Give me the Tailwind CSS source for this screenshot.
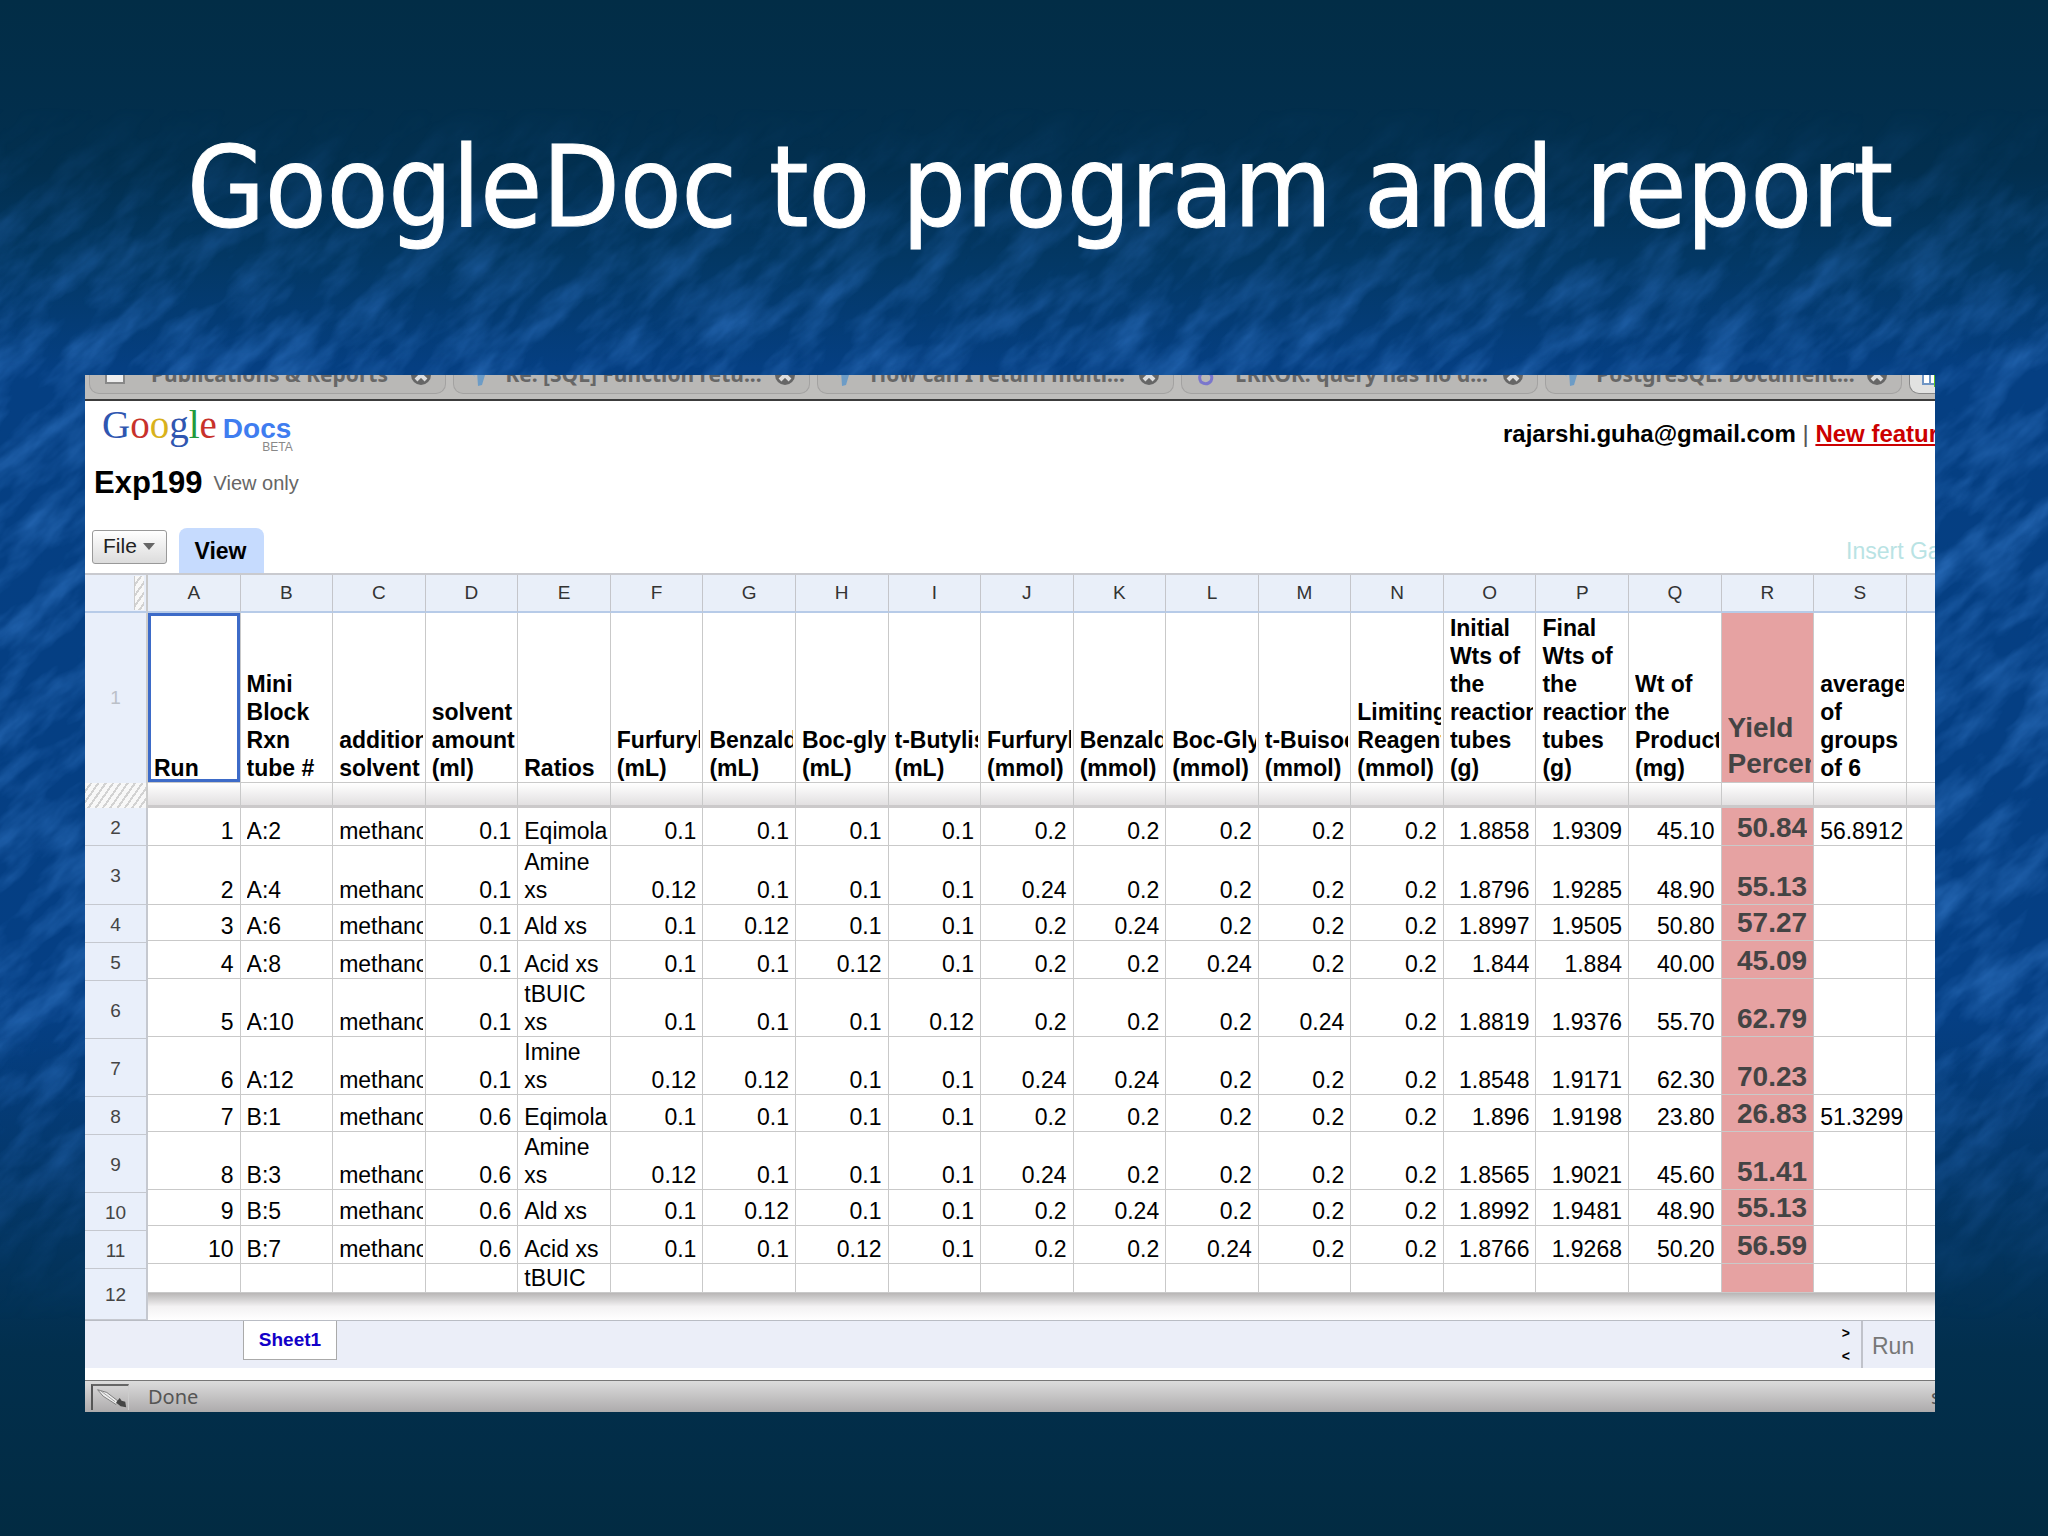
<!DOCTYPE html>
<html lang="en">
<head>
  <meta charset="UTF-8" />
  <meta name="viewport" content="width=device-width, initial-scale=1.0" />
  <title>GoogleDoc to program and report</title>
  <script src="https://cdn.jsdelivr.net/npm/@tailwindcss/browser@4"></script>
</head>
<body class="relative min-h-screen overflow-x-hidden bg-[linear-gradient(180deg,#022d46_0%,#022f4f_11%,#033865_17%,#053f82_24%,#053f84_66%,#04386c_76%,#022f4d_88%,#022b42_100%)] font-['Liberation_Sans',Arial,sans-serif] text-black">

  <!-- Slide background texture -->
  <svg class="absolute inset-0 w-full h-full [mask-image:linear-gradient(180deg,transparent_7%,black_24%,black_66%,transparent_86%)]" aria-hidden="true">
    <filter id="brush" x="0" y="0" width="100%" height="100%" color-interpolation-filters="sRGB">
      <feTurbulence type="fractalNoise" baseFrequency="0.014 0.04" numOctaves="4" seed="8" />
      <feColorMatrix values="0 0 0 0 0.16  0 0 0 0 0.42  0 0 0 0 0.72  1.6 0 0 0 -0.6" />
    </filter>
    <rect x="-900" y="-900" width="3900" height="3400" filter="url(#brush)" transform="rotate(-42 1024 768)" />
  </svg>

  <main class="relative">
    <h1 class="pt-[117px] pl-8 text-center text-[112px] leading-[140px] text-white whitespace-nowrap font-['DejaVu_Sans_Condensed',Tahoma,sans-serif] [-webkit-text-stroke:1px_white]">GoogleDoc to program and report</h1>

    <section class="mt-[118px] ml-[85px] mr-[113px] bg-white overflow-hidden">
      <!-- Browser tabs -->
      <nav id="tabs" class="flex gap-[7px] h-[26px] pl-1 bg-[#bfbebc] border-b-2 border-[#3c3c3c] overflow-hidden"></nav>

      <!-- Docs header -->
      <header class="flex justify-between h-[172px] overflow-hidden">
        <div class="flex flex-col pl-[7px]">
          <div class="relative flex items-baseline gap-[6px] pl-[10px] pt-[2px] leading-[44px]">
            <span class="text-[39px] font-['Liberation_Serif',serif]"><span class="text-[#2f56b0]">G</span><span class="text-[#c8312b]">o</span><span class="text-[#d9b21c]">o</span><span class="text-[#2f56b0]">g</span><span class="text-[#239a3b]">l</span><span class="text-[#c8312b]">e</span></span>
            <span class="text-[28px] font-bold text-[#3f7df0]">Docs</span>
            <span class="absolute right-[6px] top-[40px] text-[12px] leading-[12px] text-[#888]">BETA</span>
          </div>
          <div class="flex items-center gap-[11px] pl-[2px] pt-3 leading-[40px]">
            <h2 class="text-[31px] font-bold">Exp199</h2>
            <span class="text-[20px] text-[#666]">View only</span>
          </div>
          <div class="flex items-start gap-3 mt-auto">
            <button type="button" class="mt-[2px] flex items-center gap-[6px] h-[34px] w-[75px] pl-[10px] pb-[2px] rounded-[3px] border border-[#999] bg-linear-to-b from-white to-[#dcdcdc] text-[21px] text-[#222]">File
              <svg class="w-3 h-[7px]" viewBox="0 0 12 7"><path d="M0 0h12L6 7z" fill="#666" /></svg>
            </button>
            <button type="button" class="h-[45px] w-[85px] pt-[2px] pr-[2px] rounded-t-[8px] bg-[#c6dbfe] text-[23px] font-bold">View</button>
          </div>
        </div>
        <div class="flex flex-col justify-between w-[432px] whitespace-nowrap">
          <div class="pt-[17px] text-[24px] leading-[32px] font-bold">rajarshi.guha@gmail.com <span class="font-normal text-[#555]">|</span> <a href="#" class="text-[#cc0000] underline">New features</a></div>
          <a href="#" class="pl-[343px] pb-[7px] text-[23px] leading-[30px] text-[#b9e3e4]">Insert Gadget</a>
        </div>
      </header>

      <!-- Spreadsheet -->
      <div class="flex border-t-2 border-[#c9cacf]">
        <table class="w-[63px] shrink-0 table-fixed border-separate border-spacing-0 bg-[#e9effa] text-[19px] text-[#444]">
          <tbody id="rowLabels"></tbody>
        </table>
        <div class="flex-1 min-w-0 overflow-hidden">
          <table class="w-[103.6%] table-fixed border-separate border-spacing-0 text-[23px] leading-[28px]">
            <thead>
              <tr id="letters" class="bg-[#e9eff9] text-[19px] text-[#333]"></tr>
            </thead>
            <tbody id="cells"></tbody>
          </table>
          <div class="h-[27px] bg-linear-to-b from-[#b8b6b6] via-[#f3f2f3] to-white"></div>
        </div>
      </div>

      <!-- Sheet bar -->
      <div class="flex h-[48px] pl-[158px] bg-[#ebeef8] border-t border-[#b9bcc4]">
        <button type="button" class="h-[39px] w-[94px] bg-white border border-t-0 border-[#aaa] text-[19px] font-bold text-[#1200c8]">Sheet1</button>
        <div class="ml-auto flex flex-col justify-center gap-[8px] mr-[11px] text-[14px] leading-[15px] font-bold">
          <button type="button">&gt;</button>
          <button type="button">&lt;</button>
        </div>
        <div class="w-[74px] pl-[9px] border-l-2 border-[#c0c2ca] text-[23px] leading-[50px] text-[#777]">Run</div>
      </div>

      <!-- Status bar -->
      <footer class="mt-3 flex items-center h-[32px] pl-[6px] border-t border-[#777] bg-linear-to-b from-[#dcdcdc] to-[#adabac] font-['Noto_Sans',sans-serif] text-[20px] leading-[28px] text-[#555]">
        <svg class="w-[38px] h-[26px] border-l-2 border-t-2 border-l-[#555] border-t-[#666] border-r border-r-[#ccc]" viewBox="0 0 38 26">
          <path d="M5 4l10 3 13 10-3 3-14-9z" fill="#eee" stroke="#777" />
          <path d="M8 5l16 12" stroke="#999" />
          <path d="M25 18l4-5 2 3 4 1 1 6-6-1z" fill="#444" />
        </svg>
        <span class="pl-[19px]">Done</span>
        <span class="ml-auto w-[4px] overflow-hidden">s</span>
      </footer>
    </section>
  </main>

  <script>
    const elephant = '<svg class="w-6 h-7 shrink-0" viewBox="0 0 24 28"><path d="M1 8l5 3 3 7-5-5z" fill="#8fb0cd"/><path d="M8 2h12l-1 14-3 10-4 1-1-15z" fill="#6d9cc6"/><path d="M9 6v8M19 8l3 6" stroke="#8fb0cd" stroke-width="2"/></svg>';
    const page = '<svg class="w-6 h-7 shrink-0" viewBox="0 0 24 28"><path d="M4 2h18v22H4z" fill="#eee" stroke="#888" stroke-width="2"/></svg>';
    const spiral = '<svg class="w-6 h-7 shrink-0" viewBox="0 0 24 28"><path d="M8 4l3 8q-8 4-4 11 6 4 10-1 3-7-5-9l8-5" fill="none" stroke="#7a76cc" stroke-width="3"/></svg>';
    const closeIcon = '<svg class="w-6 h-6 shrink-0" viewBox="0 0 24 24"><circle cx="12" cy="12" r="10" fill="#666"/><path d="M7 7l10 10M17 7L7 17" stroke="#ddd" stroke-width="4"/></svg>';

    const tabs = [
      [page, 'Publications &amp; Reports'],
      [elephant, 'Re: [SQL] Function retu...'],
      [elephant, 'How can I return multi...'],
      [spiral, 'ERROR: query has no d...'],
      [elephant, 'PostgreSQL: Document...']
    ];
    document.getElementById('tabs').innerHTML = tabs.map(([icon, title]) => `
      <div class="flex items-end justify-between w-[357px] h-[19px] shrink-0 px-3 pb-[6px] rounded-b-[10px] border border-t-0 border-[#a3a2a1] bg-[#b9b8b6]">
        ${icon}<a href="#" class="flex-1 pb-[2px] pl-1 text-center font-['Noto_Sans',sans-serif] text-[21px] leading-[22px] font-bold text-[#666] whitespace-nowrap">${title}</a>${closeIcon}
      </div>`).join('') + `
      <div class="flex items-end w-[357px] h-[19px] shrink-0 px-3 pb-[6px] rounded-b-[10px] border border-t-0 border-[#888] bg-[#e2e2e1]">
        <svg class="w-6 h-6" viewBox="0 0 24 24"><path d="M1 1h20v20H1zM1 11h20M8 1v20" fill="#fff" stroke="#6f95c4" stroke-width="2"/><path d="M12 8h12v16H12z" fill="#5cc21f"/></svg>
      </div>`;

    const line = 'border-r border-b border-[#c9c9c9]';

    document.getElementById('letters').innerHTML = [...'ABCDEFGHIJKLMNOPQRS', ''].map(l =>
      `<th scope="col" class="h-[38px] font-normal border-r border-r-[#c4c5ca] border-b-2 border-b-[#b7cbe8]">${l}</th>`).join('');

    const labels = [
      ['2', 'h-[38px]'], ['3', 'h-[59px]'], ['4', 'h-[38px]'], ['5', 'h-[38px]'], ['6', 'h-[58px]'], ['7', 'h-[58px]'],
      ['8', 'h-[38px]'], ['9', 'h-[58px]'], ['10', 'h-[38px]'], ['11', 'h-[38px]'], ['12', 'h-[51px]']
    ];
    const hatch = 'bg-[repeating-linear-gradient(125deg,#f8f8f8_0px,#f8f8f8_4px,#d2d2d2_4px,#d2d2d2_6px)]';
    document.getElementById('rowLabels').innerHTML = `
      <tr><td class="h-[38px] p-0 border-b-2 border-b-[#b7cbe8] border-r-2 border-r-[#c9c9c9]"><div class="ml-auto mr-[2px] w-[10px] h-[34px] border-l border-[#ccc] ${hatch}"></div></td></tr>
      <tr><th scope="row" class="h-[170px] font-normal text-[#bbc0c8] border-r-2 border-[#ccc]">1</th></tr>
      <tr><td class="h-[25px] border-r-2 border-[#ccc] ${hatch}"></td></tr>` +
      labels.map(([n, h]) => `<tr><th scope="row" class="${h} p-0 pt-[3px] font-normal border-r-2 border-b border-[#c5c8cf]">${n}</th></tr>`).join('');

    const head = [
      'Run', 'Mini\nBlock\nRxn\ntube #', 'additional\nsolvent', 'solvent\namount\n(ml)', 'Ratios', 'Furfurylamine\n(mL)',
      'Benzaldehyde\n(mL)', 'Boc-glycine\n(mL)', 't-Butylisocyanide\n(mL)', 'Furfurylamine\n(mmol)', 'Benzaldehyde\n(mmol)',
      'Boc-Glycine\n(mmol)', 't-Buisocyanide\n(mmol)', 'Limiting\nReagent\n(mmol)', 'Initial\nWts of\nthe\nreaction\ntubes\n(g)',
      'Final\nWts of\nthe\nreaction\ntubes\n(g)', 'Wt of\nthe\nProduct\n(mg)', 'Yield\nPercent', 'average\nof\ngroups\nof 6', ''
    ];
    const headRow = '<tr>' + head.map((t, i) => {
      const extra = i === 17 ? 'bg-[#e6a2a2] text-[#444] text-[28px] leading-[36px]' : i === 0 ? 'shadow-[inset_0_0_0_3px_#3d6bc8]' : '';
      return `<td class="h-[170px] p-0 pl-[6px] pr-[2px] align-bottom font-bold ${line} ${extra}"><div class="overflow-hidden whitespace-pre">${t}</div></td>`;
    }).join('') + '</tr>';

    const frozenRow = '<tr>' + head.map(() =>
      '<td class="h-[25px] p-0 border-r border-r-[#c9c9c9] border-b-3 border-b-[#cbc9ca] bg-linear-to-b from-white to-[#e2e0e1]"></td>').join('') + '</tr>';

    const rows = [
      ['h-[38px]', '1', 'A:2', 'methanol', '0.1', 'Eqimolar', '0.1', '0.1', '0.1', '0.1', '0.2', '0.2', '0.2', '0.2', '0.2', '1.8858', '1.9309', '45.10', '50.84', '56.8912', ''],
      ['h-[59px]', '2', 'A:4', 'methanol', '0.1', 'Amine\nxs', '0.12', '0.1', '0.1', '0.1', '0.24', '0.2', '0.2', '0.2', '0.2', '1.8796', '1.9285', '48.90', '55.13', '', ''],
      ['h-[36px]', '3', 'A:6', 'methanol', '0.1', 'Ald xs', '0.1', '0.12', '0.1', '0.1', '0.2', '0.24', '0.2', '0.2', '0.2', '1.8997', '1.9505', '50.80', '57.27', '', ''],
      ['h-[38px]', '4', 'A:8', 'methanol', '0.1', 'Acid xs', '0.1', '0.1', '0.12', '0.1', '0.2', '0.2', '0.24', '0.2', '0.2', '1.844', '1.884', '40.00', '45.09', '', ''],
      ['h-[58px]', '5', 'A:10', 'methanol', '0.1', 'tBUIC\nxs', '0.1', '0.1', '0.1', '0.12', '0.2', '0.2', '0.2', '0.24', '0.2', '1.8819', '1.9376', '55.70', '62.79', '', ''],
      ['h-[58px]', '6', 'A:12', 'methanol', '0.1', 'Imine\nxs', '0.12', '0.12', '0.1', '0.1', '0.24', '0.24', '0.2', '0.2', '0.2', '1.8548', '1.9171', '62.30', '70.23', '', ''],
      ['h-[37px]', '7', 'B:1', 'methanol', '0.6', 'Eqimolar', '0.1', '0.1', '0.1', '0.1', '0.2', '0.2', '0.2', '0.2', '0.2', '1.896', '1.9198', '23.80', '26.83', '51.3299', ''],
      ['h-[58px]', '8', 'B:3', 'methanol', '0.6', 'Amine\nxs', '0.12', '0.1', '0.1', '0.1', '0.24', '0.2', '0.2', '0.2', '0.2', '1.8565', '1.9021', '45.60', '51.41', '', ''],
      ['h-[36px]', '9', 'B:5', 'methanol', '0.6', 'Ald xs', '0.1', '0.12', '0.1', '0.1', '0.2', '0.24', '0.2', '0.2', '0.2', '1.8992', '1.9481', '48.90', '55.13', '', ''],
      ['h-[38px]', '10', 'B:7', 'methanol', '0.6', 'Acid xs', '0.1', '0.1', '0.12', '0.1', '0.2', '0.2', '0.24', '0.2', '0.2', '1.8766', '1.9268', '50.20', '56.59', '', ''],
      ['h-[29px]', '', '', '', '', 'tBUIC', '', '', '', '', '', '', '', '', '', '', '', '', '', '', '']
    ];
    // text columns: tube, solvent, ratios, averages
    const leftCols = [1, 2, 4, 18];
    document.getElementById('cells').innerHTML = headRow + frozenRow + rows.map(([h, ...vals]) =>
      '<tr>' + vals.map((v, i) => {
        const align = leftCols.includes(i) ? 'pl-[6px] pr-[2px]' : 'pr-[6px] text-right';
        const extra = i === 17 ? 'bg-[#e6a2a2] text-[#444] text-[28px] leading-[35px] font-bold' : '';
        return `<td class="${h} p-0 align-bottom ${line} ${align} ${extra}"><div class="overflow-hidden whitespace-pre">${v}</div></td>`;
      }).join('') + '</tr>').join('');
  </script>

</body>
</html>
